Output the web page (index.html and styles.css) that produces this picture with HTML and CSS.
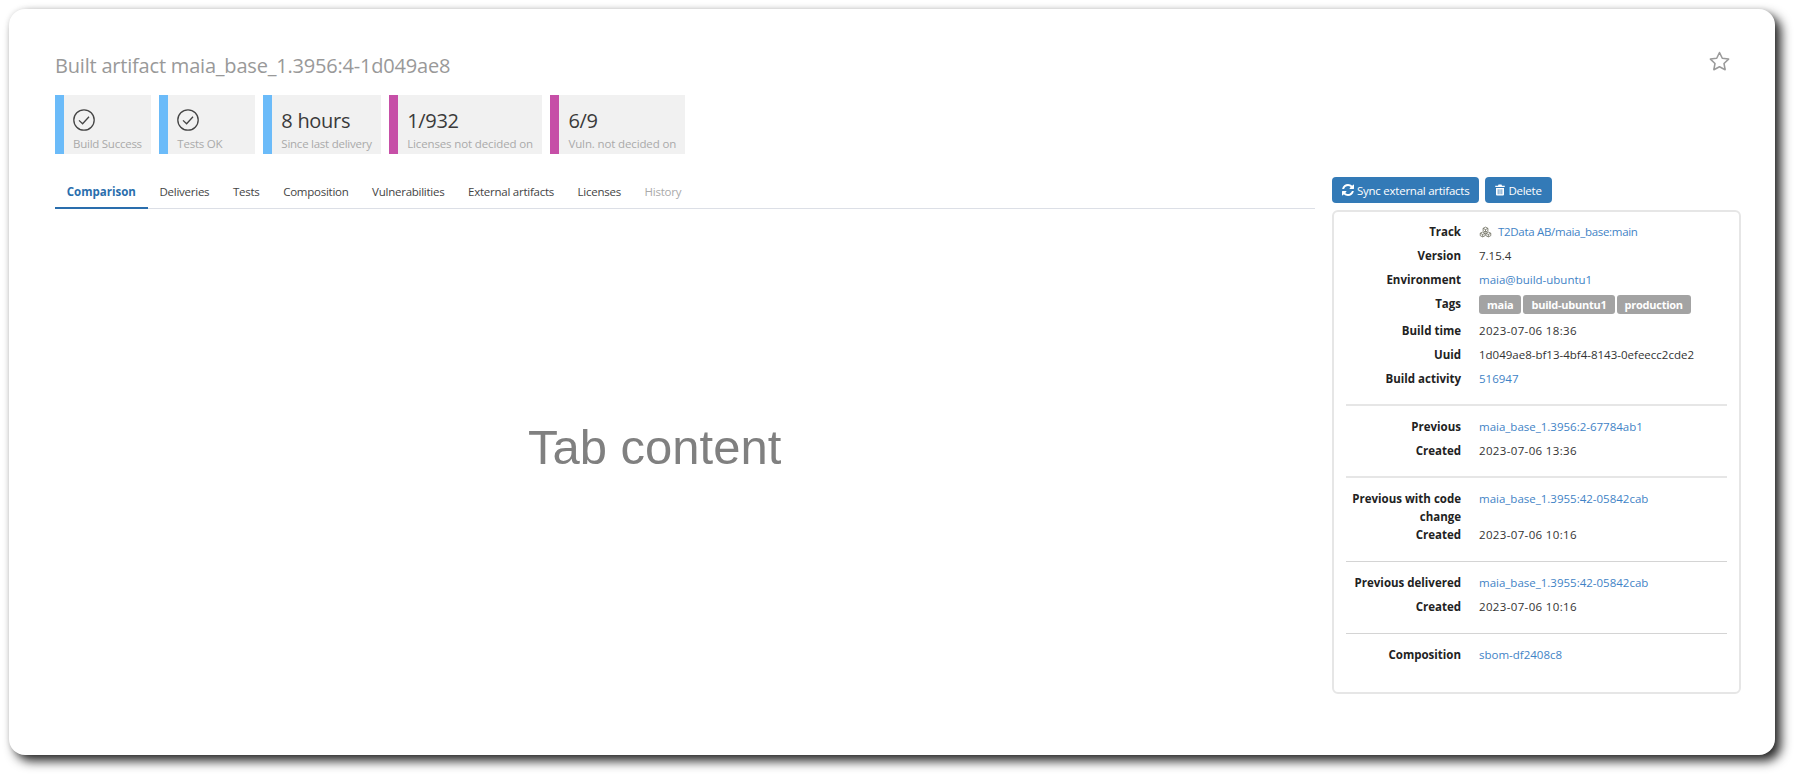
FILE: index.html
```html
<!DOCTYPE html>
<html lang="en">
<head>
<meta charset="utf-8">
<title>Built artifact</title>
<link rel="stylesheet" href="styles.css">
</head>
<body>
<main class="card">
  <header class="head">
    <h1 class="title">Built artifact maia_base_1.3956:4-1d049ae8</h1>
    <svg class="star" viewBox="0 0 24 24" aria-hidden="true"><path d="M12 2.6l2.9 6 6.6.9-4.8 4.6 1.2 6.5-5.9-3.1-5.9 3.1 1.2-6.5-4.8-4.6 6.6-.9z"/></svg>
  </header>

  <section class="tiles">
    <div class="tile ok">
      <svg class="check" viewBox="0 0 24 24" aria-hidden="true"><circle cx="12" cy="12" r="10.2"/><path d="M7 12.4l3.6 3.4L17 8.8"/></svg>
      <div class="tile-label">Build Success</div>
    </div>
    <div class="tile ok">
      <svg class="check" viewBox="0 0 24 24" aria-hidden="true"><circle cx="12" cy="12" r="10.2"/><path d="M7 12.4l3.6 3.4L17 8.8"/></svg>
      <div class="tile-label">Tests OK</div>
    </div>
    <div class="tile ok">
      <div class="tile-value">8 hours</div>
      <div class="tile-label">Since last delivery</div>
    </div>
    <div class="tile warn">
      <div class="tile-value">1/932</div>
      <div class="tile-label">Licenses not decided on</div>
    </div>
    <div class="tile warn">
      <div class="tile-value">6/9</div>
      <div class="tile-label">Vuln. not decided on</div>
    </div>
  </section>

  <div class="main">
    <section class="left">
      <nav class="tabs">
        <a class="tab active">Comparison</a>
        <a class="tab">Deliveries</a>
        <a class="tab">Tests</a>
        <a class="tab">Composition</a>
        <a class="tab">Vulnerabilities</a>
        <a class="tab">External artifacts</a>
        <a class="tab">Licenses</a>
        <a class="tab muted">History</a>
      </nav>
      <div class="tab-content">Tab content</div>
    </section>

    <aside class="side">
      <div class="actions">
        <button class="btn">
          <svg class="btn-icon" viewBox="0 0 1536 1536" aria-hidden="true"><path d="M1511 928q0 5-1 7-64 268-268 434.5t-478 166.5q-146 0-282.5-55t-243.5-157l-129 129q-19 19-45 19t-45-19-19-45v-448q0-26 19-45t45-19h448q26 0 45 19t19 45-19 45l-137 137q71 66 161 102t187 36q134 0 250-65t186-179q11-17 53-117 8-23 30-23h192q13 0 22.5 9.5t9.5 22.5zm25-800v448q0 26-19 45t-45 19h-448q-26 0-45-19t-19-45 19-45l138-138q-148-137-349-137-134 0-250 65t-186 179q-11 17-53 117-8 23-30 23h-199q-13 0-22.5-9.5t-9.5-22.5v-7q65-268 270-434.5t480-166.5q146 0 284 55.5t245 156.5l130-129q19-19 45-19t45 19 19 45z"/></svg>
          Sync external artifacts
        </button>
        <button class="btn">
          <svg class="btn-icon trash" viewBox="0 0 20 24" aria-hidden="true"><path d="M7 1h6l1 2.500h5.500V6H.5V3.500H6zM2 8h16v13a2 2 0 0 1-2 2H4a2 2 0 0 1-2-2zm3.500 2.500v10H7v-10zm3.750 0v10h1.500v-10zm3.750 0v10h1.500v-10z" fill-rule="evenodd"/></svg>
          Delete
        </button>
      </div>
      <div class="panel">
        <dl class="group">
          <dt>Track</dt>
          <dd>
            <svg class="cubes" viewBox="0 0 16 14" aria-hidden="true"><path d="M8 1l3 1.500v3L8 7 5 5.500v-3zM5 2.500L8 4l3-1.500M8 4v3M4.500 7l3 1.500v3l-3 1.500-3-1.500v-3zM1.500 8.500l3 1.500 3-1.500M4.500 10v3M11.500 7l3 1.500v3l-3 1.500-3-1.500v-3zM8.500 8.500l3 1.500 3-1.500M11.500 10v3"/></svg>
            <a class="link track">T2Data AB/maia_base:main</a>
          </dd>
          <dt>Version</dt>
          <dd>7.15.4</dd>
          <dt>Environment</dt>
          <dd><a class="link">maia@build-ubuntu1</a></dd>
          <dt>Tags</dt>
          <dd class="tags">
            <span class="tag">maia</span><span class="tag">build-ubuntu1</span><span class="tag">production</span>
          </dd>
          <dt>Build time</dt>
          <dd class="date">2023-07-06 18:36</dd>
          <dt>Uuid</dt>
          <dd>1d049ae8-bf13-4bf4-8143-0efeecc2cde2</dd>
          <dt>Build activity</dt>
          <dd><a class="link">516947</a></dd>
        </dl>
        <dl class="group">
          <dt>Previous</dt>
          <dd><a class="link">maia_base_1.3956:2-67784ab1</a></dd>
          <dt>Created</dt>
          <dd class="date">2023-07-06 13:36</dd>
        </dl>
        <dl class="group thin">
          <dt class="wrapped">Previous with code change</dt>
          <dd><a class="link">maia_base_1.3955:42-05842cab</a></dd>
          <dt>Created</dt>
          <dd class="date">2023-07-06 10:16</dd>
        </dl>
        <dl class="group thin">
          <dt>Previous delivered</dt>
          <dd><a class="link">maia_base_1.3955:42-05842cab</a></dd>
          <dt>Created</dt>
          <dd class="date">2023-07-06 10:16</dd>
        </dl>
        <dl class="group">
          <dt>Composition</dt>
          <dd><a class="link">sbom-df2408c8</a></dd>
        </dl>
      </div>
    </aside>
  </div>
</main>
</body>
</html>
```

FILE: styles.css
```css
* { box-sizing: border-box; }

html, body {
  margin: 0;
  height: 100%;
  background: #fff;
  overflow: hidden;
}

body {
  padding: 9px 25px 25px 9px;
  font-family: "Open Sans", "Noto Sans", sans-serif;
  font-size: 11.5px;
  letter-spacing: -0.25px;
  color: #333;
}

.card {
  height: 746px;
  padding: 0 34px 0 46px;
  background: #fff;
  border-radius: 16px;
  box-shadow: 6px 6px 11px rgba(0, 0, 0, 0.85), 0 0 5px rgba(0, 0, 0, 0.1);
}

.head {
  display: flex;
  justify-content: space-between;
  align-items: flex-start;
  height: 86px;
  padding-top: 43px;
}

.title {
  margin: 0;
  font-size: 20px;
  line-height: 28px;
  font-weight: 400;
  letter-spacing: -0.2px;
  color: #999;
}

.star {
  width: 23px;
  height: 23px;
  margin: -2px 10px 0 0;
  fill: none;
  stroke: #9a9a9a;
  stroke-width: 1.6;
  stroke-linejoin: round;
}

.tiles {
  display: flex;
  gap: 8.5px;
}

.tile {
  min-width: 95.5px;
  height: 59px;
  padding: 0 9px;
  background: #f1f1f1;
  border-left: 9px solid;
  display: flex;
  flex-direction: column;
}
.tile.ok { border-color: #6bbbf9; }
.tile.warn { border-color: #c64fa7; }

.check {
  width: 24px;
  height: 24px;
  margin: 13px 0 0 -1px;
  fill: none;
  stroke: #444;
  stroke-width: 1.3;
}

.tile-value {
  margin-top: 12px;
  font-size: 20px;
  line-height: 28px;
  letter-spacing: -0.3px;
  color: #3a3a3a;
}

.tile-label {
  margin-top: auto;
  padding-bottom: 2px;
  font-size: 11.5px;
  line-height: 17px;
  letter-spacing: -0.25px;
  color: #aaa;
}
.tile.warn .tile-label { letter-spacing: -0.13px; }

.main {
  display: flex;
  gap: 17px;
  margin-top: 23px;
}

.left {
  width: 1260px;
  flex: none;
}

.tabs {
  display: flex;
  height: 32px;
  border-bottom: 1px solid #dcdfe6;
}

.tab {
  padding: 6px 11.8px 0;
  line-height: 17px;
  color: #444;
}
.tab.active {
  height: 32px;
  font-weight: 700;
  letter-spacing: 0;
  color: #2a6ead;
  border-bottom: 2px solid #2a6ead;
}
.tab.muted { color: #aaa; }

.tab-content {
  padding: 210px 0 0 473px;
  font-family: "Liberation Sans", Arial, sans-serif;
  font-size: 49px;
  line-height: 56px;
  letter-spacing: 0;
  color: #808080;
}

.side {
  width: 409px;
  flex: none;
}

.actions {
  display: flex;
  gap: 6px;
  height: 33px;
}

.btn {
  display: flex;
  align-items: center;
  gap: 3px;
  height: 26px;
  padding: 0 10px;
  border: 0;
  border-radius: 4px;
  background: #337ab7;
  color: #fff;
  font: inherit;
  letter-spacing: inherit;
}

.btn-icon {
  width: 12px;
  height: 12px;
  fill: #fff;
}
.btn-icon.trash { width: 10px; }

.panel {
  height: 484px;
  padding: 8px 12px 0;
  border: 2px solid #e6e6e6;
  border-radius: 6px;
}

.group {
  display: grid;
  grid-template-columns: 115px 1fr;
  column-gap: 18px;
  margin: 0 0 9px;
  padding: 0 0 13px;
  border-bottom: 2px solid #e6e6e6;
}
.group.thin {
  padding-bottom: 14px;
  border-bottom: 1px solid #d4d4d4;
}
.group:last-child {
  border-bottom: 0;
  margin-bottom: 0;
}

dt {
  padding: 3px 0;
  font-weight: 700;
  line-height: 18px;
  letter-spacing: 0;
  text-align: right;
  color: #222;
}
dt.wrapped {
  padding-bottom: 0;
  margin-bottom: -3px;
}

dd {
  margin: 0;
  padding: 3px 0;
  line-height: 18px;
  letter-spacing: 0;
  color: #333;
}
dd.date { letter-spacing: 0.35px; }

.link { color: #3f83c6; }
.link.track { letter-spacing: -0.3px; }

.cubes {
  width: 13px;
  height: 12px;
  margin-right: 3px;
  vertical-align: -2px;
  fill: none;
  stroke: #6f6f60;
  stroke-width: 1;
}

.tags {
  display: flex;
  gap: 2px;
  padding: 3px 0 5px;
}

.tag {
  height: 19px;
  padding: 0 8px;
  border-radius: 3px;
  background: #a3a3a3;
  color: #fff;
  font-weight: 700;
  font-size: 11px;
  letter-spacing: -0.25px;
  line-height: 19px;
}
```
